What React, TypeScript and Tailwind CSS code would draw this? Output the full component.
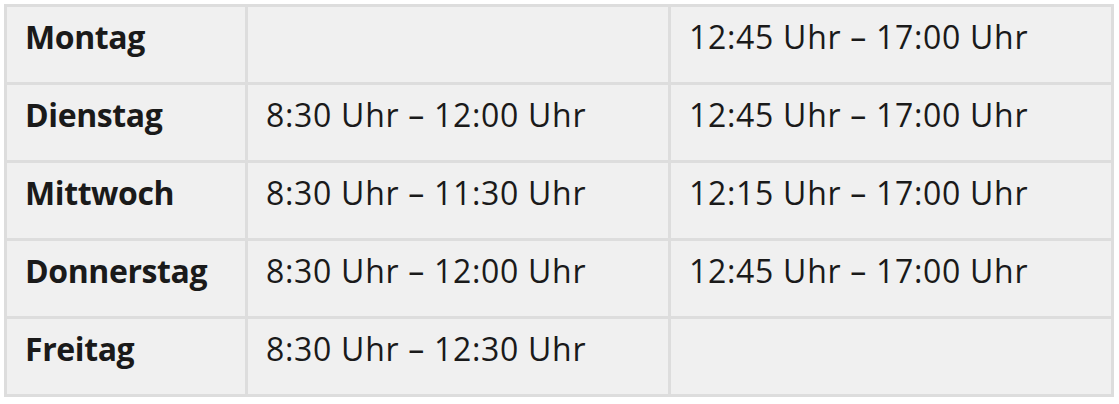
const ROWS: [string, string, string][] = [
  ["Montag", "", "12:45 Uhr – 17:00 Uhr"],
  ["Dienstag", "8:30 Uhr – 12:00 Uhr", "12:45 Uhr – 17:00 Uhr"],
  ["Mittwoch", "8:30 Uhr – 11:30 Uhr", "12:15 Uhr – 17:00 Uhr"],
  ["Donnerstag", "8:30 Uhr – 12:00 Uhr", "12:45 Uhr – 17:00 Uhr"],
  ["Freitag", "8:30 Uhr – 12:30 Uhr", ""],
];

export default function App() {
  return (
    <div className="w-[1119px] h-[404px] bg-white pt-[4px] pl-[4px]" style={{ fontFamily: '"Open Sans", sans-serif' }}>
      <div className="grid w-[1110px] grid-cols-[238px_420px_440px] gap-[3px] bg-[#dddddd] p-[3px] text-[#1a1a1a]">
        {ROWS.map(([day, am, pm]) => (
          <div key={day} className="contents">
            <div className="h-[75px] bg-[#f0f0f0] pl-[18px] pt-[6px] text-[32px] leading-[48px] font-bold tracking-[-0.4px]">{day}</div>
            <div className="h-[75px] bg-[#f0f0f0] pl-[18px] pt-[6px] text-[32px] leading-[48px] tracking-[0.7px]">{am}</div>
            <div className="h-[75px] bg-[#f0f0f0] pl-[18px] pt-[6px] text-[32px] leading-[48px] tracking-[0.7px]">{pm}</div>
          </div>
        ))}
      </div>
    </div>
  );
}
